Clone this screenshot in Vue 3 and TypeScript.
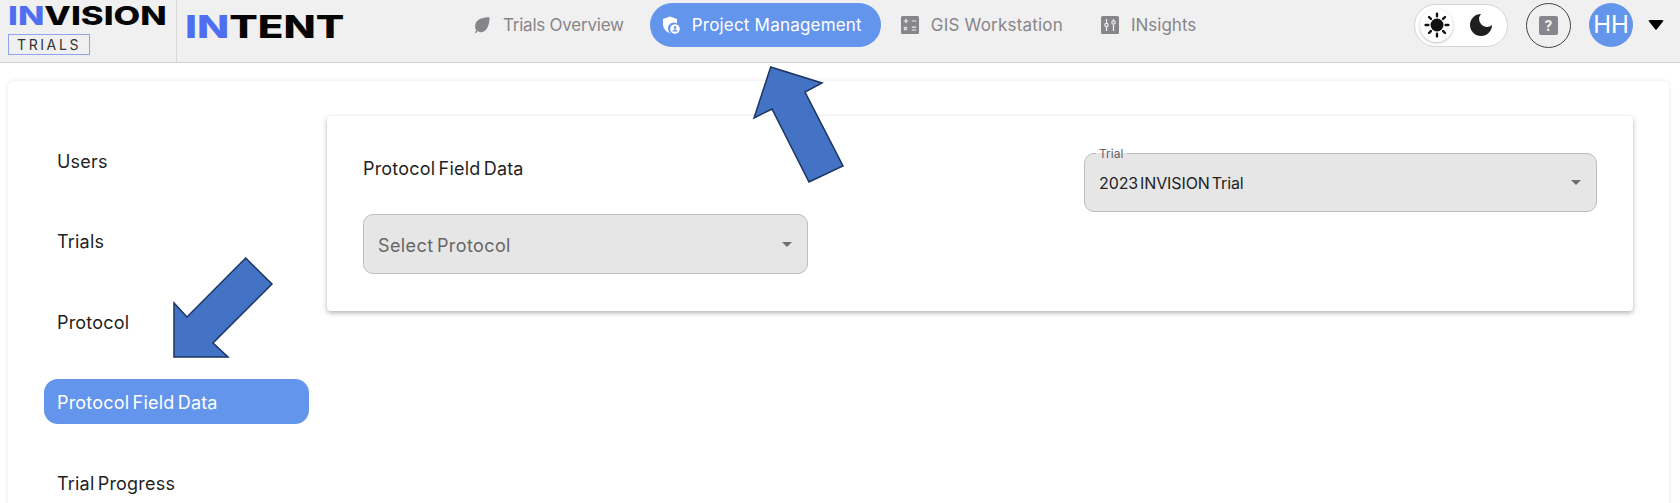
<script setup lang="ts">
const sideItems: string[] = ['Users', 'Trials', 'Protocol', 'Protocol Field Data', 'Trial Progress']
const activeSide = 'Protocol Field Data'
</script>

<template>
  <div class="page">
    <header class="header">
      <div class="brand">
        <div class="logo logo-main"><span class="blue">IN</span>VISION</div>
        <div class="trials-tag"><span>TRIALS</span></div>
      </div>
      <div class="logo logo-intent"><span class="blue">IN</span>TENT</div>

      <nav class="nav">
        <div class="nav-item tight">
          <svg class="nav-icon" viewBox="0 0 18 18"><path d="M16.5 1.2C9 1.2 3 3.4 2.2 9.2c-.3 2.200.3 3.800 1.200 5L1.800 16.500l1.100.8 1.700-2.200c1.300 1 3 1.300 4.800.8 5.200-1.500 7.100-8 7.100-14.700z" fill="#87858a"/></svg>
          <span>Trials Overview</span>
        </div>
        <div class="nav-item active">
          <svg class="nav-icon" viewBox="0 0 18 18"><path d="M8 .5 15 3v4.500a5.500 5.500 0 0 0-6.500 9.800C4.200 16.300 1 12.500 1 7.700V3z" fill="#fff"/><circle cx="13" cy="13" r="4.800" fill="#fff"/><circle cx="13" cy="11.600" r="1.300" fill="#6495ed"/><path d="M10.300 15.500c.6-1.300 1.600-1.900 2.700-1.900s2.100.6 2.700 1.900z" fill="#6495ed"/></svg>
          <span>Project Management</span>
        </div>
        <div class="nav-item">
          <svg class="nav-icon" viewBox="0 0 18 18"><rect width="18" height="18" rx="1.500" fill="#87858a"/><path d="M2.800 5h4.400M5 2.800v4.400M10.800 5h4.400M2.900 11l3.200 3.200M6.100 11l-3.200 3.200M10.800 11.200h4.400M10.800 14h4.400" stroke="#f0f0f0" stroke-width="1.200" fill="none"/></svg>
          <span>GIS Workstation</span>
        </div>
        <div class="nav-item last">
          <svg class="nav-icon" viewBox="0 0 18 18"><rect width="18" height="18" rx="1.500" fill="#87858a"/><path d="M5.500 3v4M5.500 11v4M12.500 3v1.500M12.500 9v6" stroke="#f0f0f0" stroke-width="1.200" fill="none"/><circle cx="5.500" cy="9" r="1.700" fill="none" stroke="#f0f0f0" stroke-width="1.200"/><circle cx="12.500" cy="6.500" r="1.700" fill="none" stroke="#f0f0f0" stroke-width="1.200"/></svg>
          <span>INsights</span>
        </div>
      </nav>

      <div class="tools">
        <div class="theme-toggle">
          <div class="knob">
            <svg width="26" height="26" viewBox="0 0 24 24">
              <circle cx="12" cy="12" r="6" fill="#111"/>
              <path d="M12 1.500v2.500M12 20v2.500M1.500 12h2.500M20 12h2.500M4.600 4.600l1.800 1.800M17.600 17.600l1.800 1.800M4.600 19.400l1.800-1.800M17.600 6.400l1.800-1.800" stroke="#111" stroke-width="2.200" stroke-linecap="round"/>
            </svg>
          </div>
          <svg class="moon" width="24" height="24" viewBox="0 0 24 24"><path d="M12 1a11 11 0 1 0 11 11 7.800 7.800 0 0 1-11-11z" fill="#1f1f1f"/></svg>
        </div>
        <div class="help"><div class="help-square">?</div></div>
        <div class="avatar">HH</div>
        <svg class="user-caret" width="16" height="10" viewBox="0 0 16 10"><path d="M1 1.500Q0 0 2 0h12q2 0 1 1.500L8.800 9.200q-.8 1-1.600 0z" fill="#000"/></svg>
      </div>
    </header>

    <main class="main">
      <div class="outer-card">
        <aside class="sidebar">
          <div v-for="item in sideItems" :key="item" class="side-item" :class="{ selected: item === activeSide }">{{ item }}</div>
        </aside>
        <section class="content">
          <div class="inner-card">
            <div class="top-row">
              <div class="title">Protocol Field Data</div>
              <div class="select trial-select">
                <span class="float-label">Trial</span>
                <span class="value">2023 INVISION Trial</span>
                <span class="caret"></span>
              </div>
            </div>
            <div class="select protocol-select">
              <span class="placeholder">Select Protocol</span>
              <span class="caret"></span>
            </div>
          </div>
        </section>
      </div>
    </main>

    <svg class="annotations" width="1680" height="503" viewBox="0 0 1680 503">
      <polygon points="245.700,258 272,284 213,343 228,357 174,357 174,303 187,317" />
      <polygon points="770.700,67 822,83 805,92 843,166 809,182 772,109 754,118" />
    </svg>
  </div>
</template>

<style>
html, body { margin: 0; background: #fff; }
</style>

<style scoped>
.page {
  position: relative;
  width: 1680px;
  height: 503px;
  overflow: hidden;
  background: #fff;
  font-family: Inter, "Open Sans", sans-serif;
  color: #1f1f1f;
}
.header {
  display: flex;
  align-items: flex-start;
  height: 62px;
  box-sizing: content-box;
  background: #f0f0f0;
  border-bottom: 1px solid #cfcfcf;
}
.brand {
  width: 168px;
  height: 62px;
  padding-left: 8px;
  border-right: 1px solid #d8d8d8;
  flex: none;
}
.logo {
  font-family: Inter, sans-serif;
  font-weight: 800;
  color: #050505;
  white-space: nowrap;
  transform-origin: left top;
  line-height: 1;
}
.blue { color: #4f6ef0; }
.logo-main {
  font-size: 26px;
  margin-top: 3px;
  transform: scaleX(1.33);
}
.trials-tag {
  width: 80px;
  height: 19px;
  margin-top: 5px;
  border: 1px solid #8fa3ee;
  display: flex;
  align-items: center;
  justify-content: center;
  font-size: 14px;
  color: #333;
  letter-spacing: 2.600px;
}
.logo-intent {
  width: 128px;
  flex: none;
  font-size: 31px;
  margin: 11px 0 0 8px;
  transform: scaleX(1.36);
}
.nav {
  display: flex;
  gap: 8px;
  margin: 3px 0 0 148px;
}
.nav-item {
  display: flex;
  align-items: center;
  gap: 12px;
  height: 44px;
  padding: 0 18px 0 12px;
  font-size: 17px;
  letter-spacing: 0.200px;
  color: #87858a;
  border-radius: 22px;
  white-space: nowrap;
}
.nav-item.tight { letter-spacing: -0.230px; }
.nav-item.last { letter-spacing: 0; }
.nav-item.active {
  background: #6495ed;
  color: #fff;
  padding-right: 19px;
}
.nav-icon { width: 18px; height: 18px; flex: none; }
.tools {
  display: flex;
  align-items: center;
  margin: 3px 16px 0 auto;
  height: 44px;
}
.theme-toggle {
  width: 94px;
  height: 43px;
  box-sizing: border-box;
  background: #fff;
  border: 1px solid #d4d4d4;
  border-radius: 22px;
  display: flex;
  align-items: center;
  padding-left: 5px;
}
.knob {
  width: 33px;
  height: 33px;
  border-radius: 50%;
  background: #fff;
  box-shadow: 0 1px 3px rgba(0, 0, 0, 0.25);
  display: flex;
  align-items: center;
  justify-content: center;
}
.moon { margin-left: 16px; }
.help {
  width: 45px;
  height: 45px;
  box-sizing: border-box;
  margin-left: 18px;
  border: 1px solid #444;
  border-radius: 50%;
  display: flex;
  align-items: center;
  justify-content: center;
}
.help-square {
  width: 19px;
  height: 19px;
  border-radius: 2px;
  background: #88868c;
  color: #f0f0f0;
  font-size: 14px;
  font-weight: 700;
  line-height: 19px;
  text-align: center;
}
.avatar {
  width: 44px;
  height: 44px;
  margin-left: 18px;
  border-radius: 50%;
  background: #6495ed;
  color: #fff;
  font-size: 24px;
  line-height: 44px;
  text-align: center;
  font-family: Inter, sans-serif;
}
.user-caret { margin-left: 15px; }
.main { padding: 18px 11px 0 8px; }
.outer-card {
  display: flex;
  height: 500px;
  background: #fff;
  border-radius: 6px;
  box-shadow: 0 0 5px rgba(0, 0, 0, 0.1);
}
.sidebar {
  width: 319px;
  flex: none;
  box-sizing: border-box;
  padding: 56.500px 18px 0 36px;
  display: flex;
  flex-direction: column;
  gap: 35.500px;
}
.side-item {
  height: 45px;
  flex: none;
  line-height: 48px;
  padding-left: 13px;
  font-size: 18px;
  font-weight: 400;
  letter-spacing: 0.200px;
  word-spacing: -2px;
  border-radius: 14px;
}
.side-item.selected {
  background: #6495ed;
  color: #fff;
}
.content { flex: 1; padding-top: 35px; }
.inner-card {
  width: 1306px;
  height: 195px;
  box-sizing: border-box;
  padding: 37px 36px 0 36px;
  background: #fff;
  border-radius: 4px;
  box-shadow: 0 2px 5px rgba(0, 0, 0, 0.3);
}
.top-row {
  display: flex;
  justify-content: space-between;
  align-items: flex-start;
  margin-bottom: 2px;
}
.title {
  margin-top: 4px;
  font-size: 18px;
  line-height: 24px;
  font-weight: 400;
  letter-spacing: 0.200px;
  word-spacing: -2px;
}
.select {
  position: relative;
  box-sizing: border-box;
  display: flex;
  align-items: center;
  justify-content: space-between;
  background: #e6e6e6;
  border: 1px solid #bdbdbd;
  border-radius: 10px;
  padding: 0 14px;
}
.trial-select { width: 513px; height: 59px; }
.protocol-select { width: 445px; height: 60px; }
.float-label {
  position: absolute;
  top: -8px;
  left: 11px;
  padding: 0 3px;
  font-size: 12px;
  line-height: 15px;
  color: #666;
  background: linear-gradient(#fff 50%, #e6e6e6 50%);
}
.value { font-size: 16px; font-weight: 400; letter-spacing: -0.100px; word-spacing: -2.500px; color: #222; }
.placeholder { font-size: 18px; color: #666; letter-spacing: 0.400px; word-spacing: -2px; margin-top: 2px; }
.caret {
  width: 0;
  height: 0;
  border-left: 5px solid transparent;
  border-right: 5px solid transparent;
  border-top: 5px solid #6e6e6e;
  margin-right: 1px;
}
.annotations {
  position: absolute;
  left: 0;
  top: 0;
  pointer-events: none;
}
.annotations polygon {
  fill: #4472c4;
  stroke: #1a3560;
  stroke-width: 1.500;
}
</style>
